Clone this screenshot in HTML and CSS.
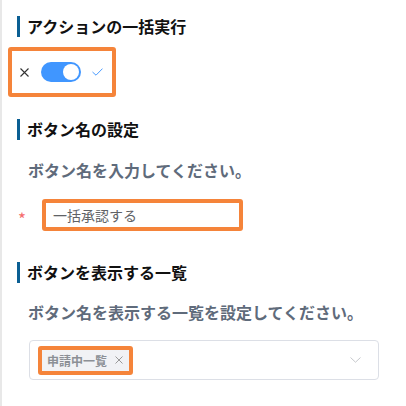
FILE: index.html
```html
<!DOCTYPE html>
<html lang="ja">
<head>
<meta charset="utf-8">
<link rel="stylesheet" href="styles.css">
</head>
<body>
<div class="page">
  <h2 class="title first">アクションの一括実行</h2>
  <div class="hl toggle-box">
    <svg class="x-icon" width="9" height="9" viewBox="0 0 9 9"><path d="M0.5 0.5 L8.5 8.5 M8.5 0.5 L0.5 8.5" stroke="#333" stroke-width="1.1" fill="none"/></svg>
    <span class="switch"><span class="knob"></span></span>
    <svg class="check" width="11" height="8" viewBox="0 0 11 8"><path d="M0.5 4 L4 7.2 L10.5 0.6" stroke="#4a9bff" stroke-width="1" fill="none"/></svg>
  </div>

  <h2 class="title t2">ボタン名の設定</h2>
  <p class="desc d1">ボタン名を入力してください。</p>
  <div class="input-row">
    <span class="req">*</span>
    <div class="hl input">一括承認する</div>
  </div>

  <h2 class="title t3">ボタンを表示する一覧</h2>
  <p class="desc d2">ボタン名を表示する一覧を設定してください。</p>
  <div class="select">
    <div class="hl tag">
      <span class="tag-text">申請中一覧</span>
      <svg width="8" height="8" viewBox="0 0 8 8"><path d="M0.5 0.5 L7.5 7.5 M7.5 0.5 L0.5 7.5" stroke="#999" stroke-width="1" fill="none"/></svg>
    </div>
    <svg class="chev" width="11" height="6" viewBox="0 0 11 6"><path d="M0.5 0.5 L5.5 5.2 L10.5 0.5" stroke="#c6c8cc" stroke-width="1" fill="none"/></svg>
  </div>
</div>
</body>
</html>
```
FILE: styles.css
```css
* { box-sizing: border-box; }
html, body { margin: 0; padding: 0; background: #fff; }
body { font-family: "Noto Sans CJK JP", "Noto Sans", sans-serif; }
.page {
  border-left: 2px solid #e8e8e8;
  padding-left: 15px;
  min-height: 406px;
  display: flex;
  flex-direction: column;
  align-items: flex-start;
}
.title {
  margin: 0;
  font-size: 16px;
  font-weight: 700;
  line-height: 21px;
  height: 21px;
  color: #111;
  border-left: 3px solid #0b5f93;
  padding-left: 7px;
}
.title.first { margin-top: 16px; }
.title.t2 { margin-top: 22px; }
.title.t3 { margin-top: 31px; }
.hl {
  border: 4px solid #f5843a;
  border-radius: 3px;
}
.toggle-box {
  margin-top: 10px;
  margin-left: -9px;
  width: 108px;
  height: 50px;
  display: flex;
  align-items: center;
  padding-left: 8px;
}
.switch {
  margin-left: 12px;
  width: 40px;
  height: 20px;
  border-radius: 10px;
  background: #4096ff;
  position: relative;
}
.knob {
  position: absolute;
  right: 2px;
  top: 2px;
  width: 16px;
  height: 16px;
  border-radius: 50%;
  background: #fff;
}
.check { margin-left: 11px; }
.desc {
  margin: 0;
  margin-left: 11px;
  font-size: 16px;
  font-weight: 700;
  line-height: 24px;
  color: #5f6b7b;
}
.d1 { margin-top: 18px; }
.d2 { margin-top: 17px; }
.input-row {
  margin-top: 17px;
  display: flex;
  align-items: center;
}
.req {
  color: #f56c6c;
  font-size: 17px;
  width: 25px;
  padding-left: 1px;
  line-height: 17px;
  margin-top: 6px;
}
.input {
  width: 201px;
  height: 32px;
  padding-left: 7px;
  display: flex;
  align-items: center;
  font-size: 14px;
  color: #606266;
  background: #fff;
}
.select {
  margin-top: 16px;
  margin-left: 12px;
  width: 350px;
  height: 40px;
  border: 1px solid #dcdfe6;
  border-radius: 4px;
  display: flex;
  align-items: center;
  padding-left: 8px;
  padding-right: 17px;
}
.tag {
  height: 29px;
  width: 95px;
  background: #f1f2f5;
  display: flex;
  align-items: center;
  padding-left: 5px;
  gap: 8px;
}
.tag-text {
  font-size: 12px;
  font-weight: 700;
  color: #8c9096;
}
.chev { margin-left: auto; }
```
